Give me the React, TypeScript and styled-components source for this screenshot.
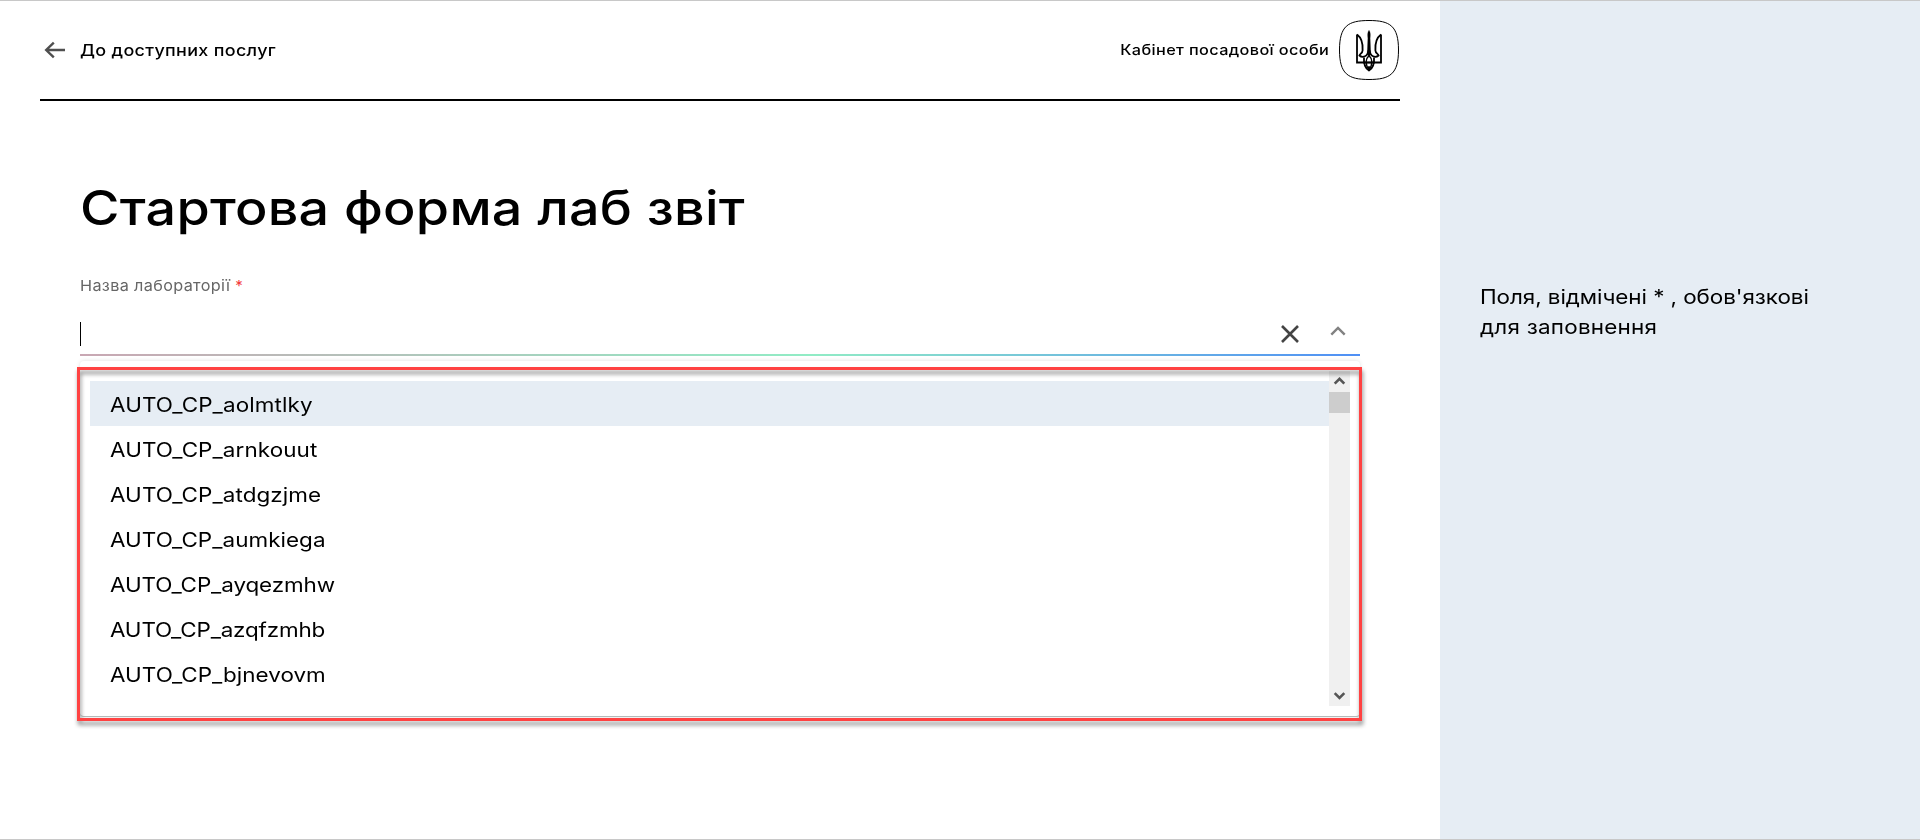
import React from 'react';
import styled, { createGlobalStyle } from 'styled-components';

const GlobalStyle = createGlobalStyle`
  *, *::before, *::after { box-sizing: border-box; }
  body {
    margin: 0;
    background: #fff;
    color: #000;
    font-family: Inter, 'Open Sans', sans-serif;
  }
`;

const Page = styled.div`
  display: flex;
  width: 1920px;
  height: 840px;
  border-top: 1px solid #c8c8c8;
  border-bottom: 1px solid #c8c8c8;
  overflow: hidden;
`;

const Main = styled.main`
  width: 1440px;
  padding: 0 40px;
`;

const Header = styled.header`
  display: flex;
  align-items: center;
  justify-content: space-between;
  height: 100px;
  padding: 0 1px 0 4px;
  border-bottom: 2px solid #000;
`;

/* Wide-set lettering: glyphs are stretched a little and tracked individually. */
const Wide = styled.span<{ $track: number; $stretch?: number; $from?: 'left' | 'right' }>`
  display: inline-block;
  white-space: nowrap;
  letter-spacing: ${(p) => p.$track}px;
  transform: scaleX(${(p) => p.$stretch ?? 1.122});
  transform-origin: ${(p) => p.$from ?? 'left'} center;
`;

const BackLink = styled.a`
  display: flex;
  align-items: center;
  gap: 14px;
  font-size: 16px;
  font-weight: 500;
  line-height: 20px;
`;

const Cabinet = styled.div`
  display: flex;
  align-items: center;
  gap: 10px;
  font-size: 14.5px;
  font-weight: 500;
  line-height: 20px;
`;

const Form = styled.section`
  padding: 75px 40px 0;
`;

const Title = styled.h1`
  margin: 0;
  font-size: 48px;
  font-weight: 500;
  line-height: 64px;
`;

const Label = styled.label`
  display: flex;
  align-items: center;
  gap: 16px;
  margin-top: 36px;
  height: 20px;
  color: #666;
  font-size: 15px;
  line-height: 20px;
`;

const Required = styled.span`
  color: #f23b3b;
`;

const InputRow = styled.div`
  display: flex;
  align-items: center;
  height: 59px;
  margin-top: -1px;
  padding: 18px 14px 0 0;
`;

const Caret = styled.span`
  width: 1px;
  height: 24px;
  background: #000;
  margin: 1px auto 0 0;
`;

const Controls = styled.span`
  display: flex;
  align-items: center;
  gap: 31px;
`;

const Underline = styled.div`
  height: 2px;
  background: linear-gradient(90deg, #c9a7b3 0%, #91ecc5 57%, #4f8ff5 100%);
`;

const Dropdown = styled.div`
  position: relative;
  height: 356px;
  margin-top: 5px;
  padding: 10px;
  display: flex;
  border-radius: 4px;
  border-bottom: 1px solid #b4b9b9;
  box-shadow: 0 0 4px rgba(0, 0, 0, 0.13);
`;

const Frame = styled.div`
  position: absolute;
  inset: 6px -2px -5px -3px;
  border: 3px solid #ff4242;
  filter: drop-shadow(1px 4px 2px rgba(0, 0, 0, 0.45));
  pointer-events: none;
`;

const Options = styled.ul`
  flex: 1;
  margin: 0;
  padding: 10px 0 0;
  list-style: none;
`;

const Option = styled.li<{ $active?: boolean }>`
  height: 45px;
  padding-left: 20px;
  background: ${(p) => (p.$active ? '#e6edf4' : 'transparent')};
  font-size: 20px;
  line-height: 48px;
`;

const Scrollbar = styled.div`
  display: flex;
  flex-direction: column;
  align-items: center;
  width: 21px;
  background: #f0f0f0;
`;

const Thumb = styled.div`
  width: 21px;
  height: 21px;
  margin-bottom: auto;
  background: #cdcdcd;
`;

const Side = styled.aside`
  flex: 1;
  padding: 280px 40px 0;
  background: #e6edf4;
  font-size: 20px;
  line-height: 32px;
`;

const Line = styled.div`
  height: 30px;
`;

const BackArrow = () => (
  <svg width="22" height="20" viewBox="0 0 22 20" fill="none" stroke="#4f4f4f" strokeWidth="2.4">
    <path d="M2 10h19M9.8 2.7 2.2 10l7.6 7.3" />
  </svg>
);

const Emblem = () => (
  <svg width="60" height="60" viewBox="0 0 60 60" fill="none" stroke="#000">
    <path d="M30 .5C51 .5 59.5 6 59.5 30S51 59.5 30 59.5.5 54 .5 30 9 .5 30 .5z" strokeWidth="1" />
    <g strokeWidth="1.8">
      <path d="M18 14.5v28h24v-28" />
      <path d="M18 14.5c5.5 4 6 10 5.600 16-.2 3-2.600 3-3.200 5 1.500 1.300 3.600 1.700 5.600.8 2.200-1 3.200-3 3.400-6M42 14.500c-5.500 4-6 10-5.600 16 .2 3 2.600 3 3.200 5-1.500 1.300-3.600 1.700-5.600.8-2.200-1-3.200-3-3.400-6" />
      <path d="M25 37.500c-.5 6 1 10.500 5 13 4-2.500 5.500-7 5-13" />
      <path d="M30 35.500c-3.600 3.500-3.600 9 0 14.500 3.600-5.500 3.600-11 0-14.500zM24 42.500h12M30 46v4" strokeWidth="1.400" />
    </g>
    <path d="M30 10.300c1.700 2 1.400 5 1.100 8l.6 15-1.700 4-1.700-4 .6-15c-.3-3-.6-6 1.100-8z" fill="#000" strokeWidth=".3" />
  </svg>
);

const ClearIcon = () => (
  <svg width="18" height="18" viewBox="0 0 18 18" stroke="#444" strokeWidth="2.6">
    <path d="m1 1 16 16M17 1 1 17" />
  </svg>
);

const ChevronUp = () => (
  <svg width="16" height="18" viewBox="0 0 16 18" fill="none" stroke="#828282" strokeWidth="2.4">
    <path d="m1.300 9.600 6.700-6.700 6.700 6.700" />
  </svg>
);

const ScrollArrow = ({ down }: { down?: boolean }) => (
  <svg width="21" height="21" viewBox="0 0 21 21" fill="none" stroke="#555" strokeWidth="2.6">
    <path d={down ? 'm5.700 8.200 4.800 4.800 4.800-4.800' : 'm5.700 12.600 4.800-4.800 4.800 4.800'} />
  </svg>
);

const laboratories = [
  { name: 'AUTO_CP_aolmtlky', track: 0.09 },
  { name: 'AUTO_CP_arnkouut', track: 0.08 },
  { name: 'AUTO_CP_atdgzjme', track: 0.07 },
  { name: 'AUTO_CP_aumkiega', track: 0.04 },
  { name: 'AUTO_CP_ayqezmhw', track: -0.1 },
  { name: 'AUTO_CP_azqfzmhb', track: -0.16 },
  { name: 'AUTO_CP_bjnevovm', track: 0.02 },
];

export default function App() {
  return (
    <Page>
      <GlobalStyle />
      <Main>
        <Header>
          <BackLink>
            <BackArrow />
            <Wide $track={0.28}>До доступних послуг</Wide>
          </BackLink>
          <Cabinet>
            <Wide $track={0.33} $from="right">Кабінет посадової особи</Wide>
            <Emblem />
          </Cabinet>
        </Header>
        <Form>
          <Title><Wide $track={0.2}>Стартова форма лаб звіт</Wide></Title>
          <Label>
            <Wide $track={0.33} $stretch={1.08}>Назва лабораторії</Wide>
            <Required>*</Required>
          </Label>
          <InputRow>
            <Caret />
            <Controls>
              <ClearIcon />
              <ChevronUp />
            </Controls>
          </InputRow>
          <Underline />
          <Dropdown>
            <Options>
              {laboratories.map((lab, i) => (
                <Option key={lab.name} $active={i === 0}>
                  <Wide $track={lab.track}>{lab.name}</Wide>
                </Option>
              ))}
            </Options>
            <Scrollbar>
              <ScrollArrow />
              <Thumb />
              <ScrollArrow down />
            </Scrollbar>
            <Frame />
          </Dropdown>
        </Form>
      </Main>
      <Side>
        <Line><Wide $track={-0.06}>Поля, відмічені * , обов'язкові</Wide></Line>
        <Line><Wide $track={0.2}>для заповнення</Wide></Line>
      </Side>
    </Page>
  );
}
